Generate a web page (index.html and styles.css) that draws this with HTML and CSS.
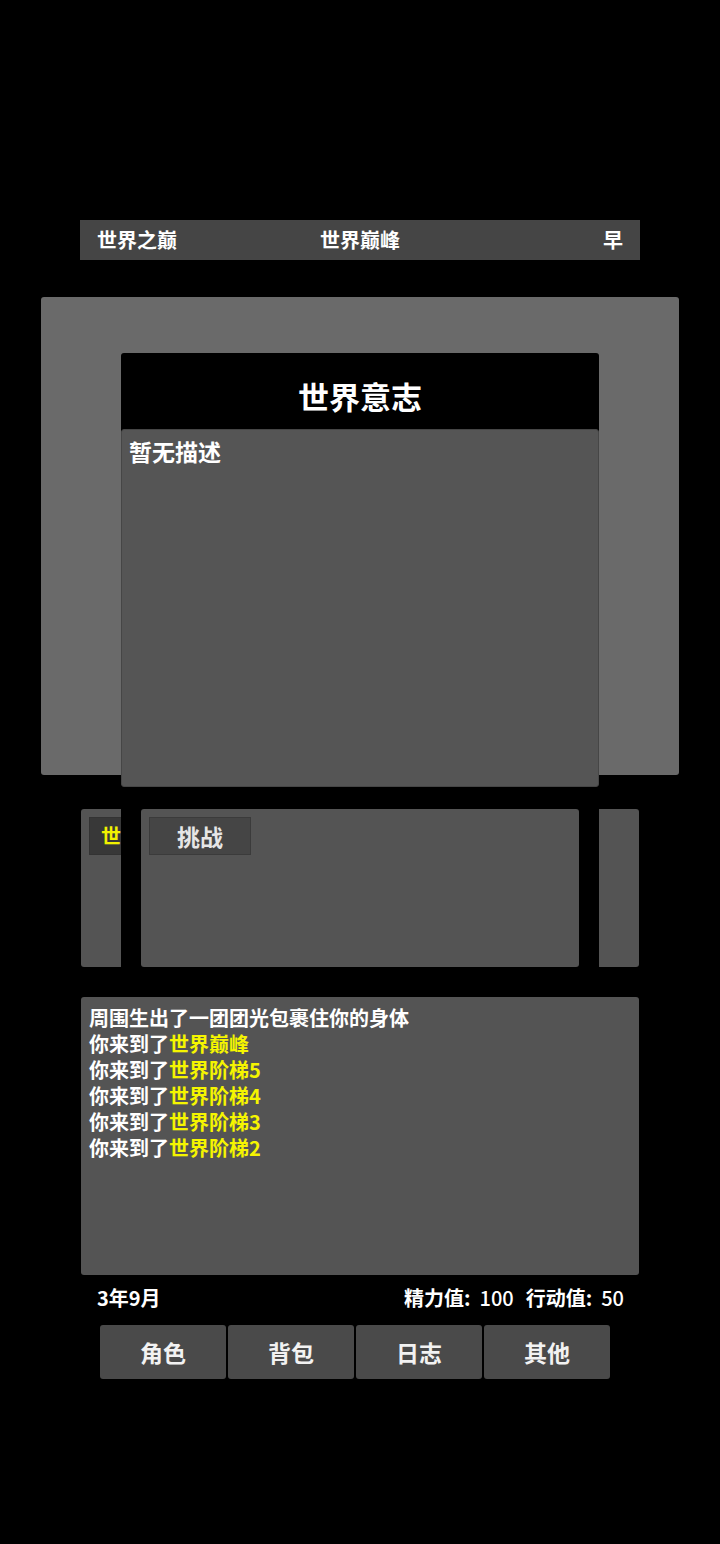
FILE: index.html
```html
<!DOCTYPE html>
<html lang="zh-CN">
<head>
<meta charset="utf-8">
<title>世界之巅</title>
<link rel="stylesheet" href="styles.css">
</head>
<body>
<div class="page">
  <div class="topbar">
    <span class="tb-left">世界之巅</span>
    <span class="tb-mid">世界巅峰</span>
    <span class="tb-right">早</span>
  </div>

  <div class="scene"></div>

  <div class="actions">
    <div class="tab">世界</div>
  </div>

  <div class="log">
    <div>周围生出了一团团光包裹住你的身体</div>
    <div>你来到了<span class="hl">世界巅峰</span></div>
    <div>你来到了<span class="hl">世界阶梯5</span></div>
    <div>你来到了<span class="hl">世界阶梯4</span></div>
    <div>你来到了<span class="hl">世界阶梯3</span></div>
    <div>你来到了<span class="hl">世界阶梯2</span></div>
  </div>

  <div class="status">
    <span>3年9月</span>
    <span class="stats"><span class="stat">精力值:<span class="num">100</span></span><span class="stat">行动值:<span class="num">50</span></span></span>
  </div>

  <div class="nav">
    <div class="nav-btn">角色</div>
    <div class="nav-btn">背包</div>
    <div class="nav-btn">日志</div>
    <div class="nav-btn">其他</div>
  </div>

  <div class="modal">
    <div class="modal-head">世界意志</div>
    <div class="modal-body">暂无描述</div>
    <div class="modal-foot">
      <div class="modal-panel">
        <div class="btn">挑战</div>
      </div>
    </div>
  </div>
</div>
</body>
</html>
```

FILE: styles.css
```css
html, body {
  margin: 0;
  padding: 0;
  background: #000;
}
body {
  font-family: "Noto Sans CJK SC", "Noto Sans", sans-serif;
  font-weight: 700;
  color: #fff;
}
.page {
  position: relative;
  width: 720px;
  height: 1544px;
  padding-top: 220px;
  box-sizing: border-box;
}
.topbar {
  margin: 0 80px;
  height: 40px;
  background: #454545;
  display: grid;
  grid-template-columns: 1fr auto 1fr;
  align-items: center;
  padding: 0 17px;
  font-size: 20px;
  line-height: 40px;
}
.tb-left { justify-self: start; }
.tb-mid { justify-self: center; }
.tb-right { justify-self: end; }

.scene {
  margin: 37px 41px 0;
  height: 478px;
  background: #6a6a6a;
  border-radius: 3px;
}

.actions {
  margin: 34px 81px 0;
  height: 158px;
  background: #545454;
  border-radius: 3px;
  padding: 8px;
  box-sizing: border-box;
}
.tab {
  width: 90px;
  height: 38px;
  background: #383838;
  border: 1px solid #333;
  box-sizing: border-box;
  color: #f2f200;
  font-size: 20px;
  line-height: 36px;
  padding-left: 11px;
}

.log {
  margin: 30px 81px 0;
  height: 278px;
  background: #545454;
  border-radius: 3px;
  padding: 8px 8px;
  box-sizing: border-box;
  font-size: 20px;
  line-height: 26px;
}
.hl { color: #f5f500; }

.status {
  margin: 10px 96px 0 97px;
  height: 26px;
  display: flex;
  justify-content: space-between;
  align-items: center;
  font-size: 20px;
  line-height: 26px;
}
.stats {
  display: flex;
  gap: 12px;
}
.num {
  margin-left: 9px;
  font-weight: 500;
}

.nav {
  margin: 14px 0 0 100px;
  display: flex;
  gap: 2px;
}
.nav-btn {
  width: 126px;
  height: 54px;
  background: #4a4a4a;
  border-radius: 3px;
  display: flex;
  align-items: center;
  justify-content: center;
  font-size: 23px;
  color: #f2f2f2;
}

.modal {
  position: absolute;
  left: 121px;
  top: 353px;
  width: 478px;
  background: #000;
  border-radius: 3px 3px 0 0;
}
.modal-head {
  height: 76px;
  display: flex;
  align-items: center;
  justify-content: center;
  font-size: 31px;
  padding-top: 8px;
  box-sizing: border-box;
}
.modal-body {
  height: 358px;
  background: #555;
  border: 1px solid #464646;
  border-radius: 3px;
  box-sizing: border-box;
  padding: 3px 7px;
  font-size: 23px;
  line-height: 36px;
}
.modal-foot {
  padding: 22px 20px 0;
}
.modal-panel {
  height: 158px;
  background: #545454;
  border-radius: 3px;
  padding: 8px;
  box-sizing: border-box;
}
.btn {
  width: 102px;
  height: 38px;
  background: #454545;
  border: 1px solid #3b3b3b;
  box-sizing: border-box;
  display: flex;
  align-items: center;
  justify-content: center;
  font-size: 23px;
  color: #e6e6e6;
}
```
